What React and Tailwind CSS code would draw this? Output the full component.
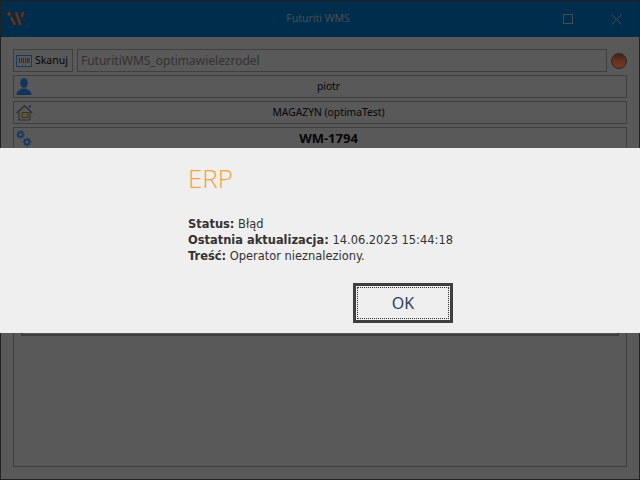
const font = { fontFamily: '"Noto Sans", sans-serif' };

function Logo() {
  return (
    <svg width="18" height="16" viewBox="0 0 18 16" className="relative z-10 block">
      <g fill="#70300f">
        <circle cx="2.2" cy="3" r="1.9" />
        <path d="M3 6.5 L5.2 5.6 L9 13.5 L6.8 14.5 Z" />
        <path d="M7.8 1.5 L10.2 1 L14.6 13.5 L12.2 14.5 Z" />
        <path d="M13.6 5.5 L14.8 1 L17.5 1 L15.4 7 Z" />
      </g>
    </svg>
  );
}

function Barcode() {
  return (
    <svg width="16" height="14" viewBox="0 0 16 14" className="relative z-10 block">
      <rect x="0.5" y="1.5" width="15" height="11" fill="none" stroke="#173a60" />
      <path d="M3.5 4v5M5.5 4v5M7.5 4v5M9.5 4v5M11.5 4v5M13 4v5" stroke="#2c2c2c" />
    </svg>
  );
}

function UserIcon() {
  return (
    <svg width="16" height="17" viewBox="0 0 16 17" className="relative z-10 block">
      <ellipse cx="8" cy="5" rx="3.8" ry="4.8" fill="#14355a" />
      <path d="M0.5 17 C0.5 12.5 4 12 6 10.5 L10 10.5 C12 12 15.5 12.5 15.5 17 Z" fill="#14355a" />
    </svg>
  );
}

function HomeIcon() {
  return (
    <svg width="17" height="17" viewBox="0 0 17 17" className="relative z-10 block">
      <path d="M0.7 9 L8.5 1.8 L16.3 9" fill="none" stroke="#2a2a2a" strokeWidth="1.2" />
      <path d="M3 8 V16 H14 V8" fill="#5c5c5c" stroke="#2a2a2a" />
      <rect x="6" y="8.5" width="6" height="5" fill="#6e5526" stroke="#333" />
      <rect x="13" y="1" width="1.6" height="3" fill="#173a60" />
    </svg>
  );
}

function Gear({ cx, cy, r }) {
  const teeth = [0, 45, 90, 135];
  return (
    <g stroke="#173a60" fill="none">
      <circle cx={cx} cy={cy} r={r} strokeWidth="1.6" />
      {teeth.map((a) => (
        <line
          key={a}
          x1={cx - (r + 2) * Math.cos((a * Math.PI) / 180)}
          y1={cy - (r + 2) * Math.sin((a * Math.PI) / 180)}
          x2={cx + (r + 2) * Math.cos((a * Math.PI) / 180)}
          y2={cy + (r + 2) * Math.sin((a * Math.PI) / 180)}
          strokeWidth="1.4"
          strokeDasharray={`${1.8} ${2 * r + 0.4}`}
        />
      ))}
    </g>
  );
}

function GearsIcon() {
  return (
    <svg width="16" height="17" viewBox="0 0 16 17" className="relative z-10 block">
      <Gear cx={4.5} cy={4.5} r={2.2} />
      <Gear cx={11} cy={12} r={2.4} />
    </svg>
  );
}

function Row({ icon, bold, children }) {
  return (
    <div className="flex h-[23px] shrink-0 items-center border border-[#acacac] bg-[#f0f0f0]">
      <span className="ml-[2px] w-[20px] shrink-0">{icon}</span>
      <span className={bold ? "flex-1 pr-[5px] text-center text-[13px] font-bold text-[#111]" : "flex-1 pr-[5px] text-center text-[10.3px] text-[#111]"}>{children}</span>
    </div>
  );
}

export default function App() {
  return (
    <div className="relative h-[480px] w-[640px] overflow-hidden bg-[#f0f0f0]" style={font}>
      <div className="flex h-full flex-col border border-[#5a5a5a]">
        <header className="relative flex h-[36px] shrink-0 items-center bg-[#007acc] pl-[6px]">
          <Logo />
          <span className="absolute inset-x-0 pr-[4px] text-center text-[10.5px] text-[#bcd0e2]">Futuriti WMS</span>
          <div className="ml-auto flex items-center">
            <span className="mr-[38px] block h-[10px] w-[10px] border border-[#bcd0e2]" />
            <svg width="11" height="11" viewBox="0 0 11 11" className="mr-[17px] block">
              <path d="M0.5 0.5 L10.5 10.5 M10.5 0.5 L0.5 10.5" stroke="#bcd0e2" />
            </svg>
          </div>
        </header>
        <main className="flex min-h-0 flex-1 flex-col gap-[3px] px-[12px] pb-[12px] pt-[12px]">
          <div className="flex h-[23px] shrink-0 items-stretch">
            <div className="flex w-[60px] items-center border border-[#acacac] pl-[2px] text-[#111]">
              <Barcode />
              <span className="ml-[3px] text-[10.5px]">Skanuj</span>
            </div>
            <div className="ml-[4px] flex w-[531px] items-center border border-[#acacac] pl-[3px] text-[12px] text-[#8f8888]">
              FuturitiWMS_optimawielezrodel
            </div>
            <div className="ml-[4px] flex items-center">
              <span className="relative z-10 block h-[16px] w-[16px] rounded-full border-[1.5px] border-[#33251f] bg-[linear-gradient(to_bottom,#40221a,#62301f_45%,#743c26)]" />
            </div>
          </div>
          <Row icon={<UserIcon />}>piotr</Row>
          <Row icon={<HomeIcon />}>MAGAZYN (optimaTest)</Row>
          <Row icon={<GearsIcon />} bold>WM-1794</Row>
          <div className="mt-[2px] flex min-h-0 flex-1 flex-col border border-[#acacac] px-[7px] pt-[30px] pb-[130px]">
            <div className="flex-1 border-2 border-[#acacac]" />
          </div>
        </main>
      </div>

      <div className="absolute inset-0 bg-black/[0.63]" />

      <div className="absolute inset-x-0 top-[148px] z-20 h-[185px] bg-[#efefef]">
        <div className="ml-[188px] w-[300px]">
          <h1 className="pt-[12px] text-[26px] font-light leading-[36px] text-[#f9a23c]" style={{ fontFamily: '"Open Sans", sans-serif' }}>ERP</h1>
          <div className="mt-[20px] text-[11.45px] leading-[16px] text-[#333]" style={{ fontFamily: '"DejaVu Sans", sans-serif' }}>
            <p><b>Status:</b> Błąd</p>
            <p><b>Ostatnia aktualizacja:</b> 14.06.2023 15:44:18</p>
            <p><b>Treść:</b> Operator nieznaleziony.</p>
          </div>
        </div>
        <div className="absolute left-[353px] top-[135px] flex h-[40px] w-[100px] items-center justify-center border-[3px] border-[#3f3f3f] bg-[#efefef] text-[16px] text-[#2d3f5c] outline-1 -outline-offset-[5px] outline-dotted outline-[#333]">
          OK
        </div>
      </div>
    </div>
  );
}
